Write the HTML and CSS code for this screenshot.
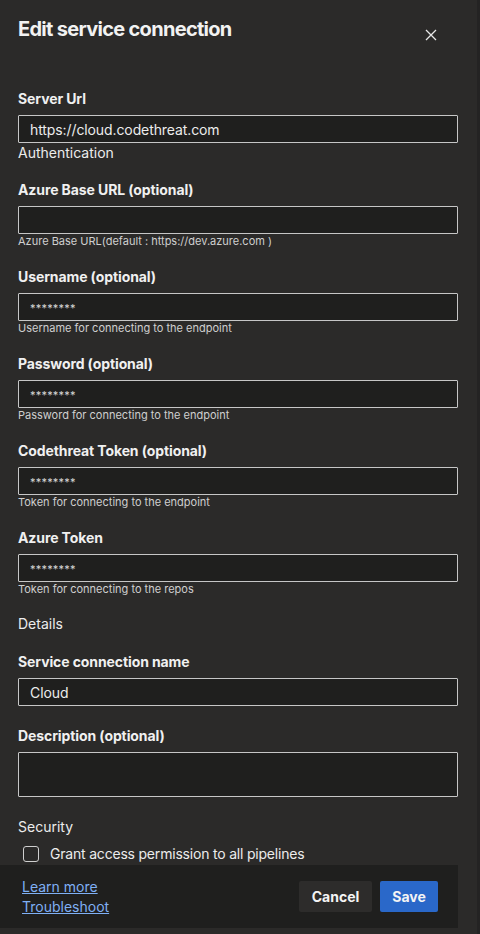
FILE: index.html
```html
<!DOCTYPE html>
<html lang="en">
<head>
<meta charset="utf-8">
<title>Edit service connection</title>
<link rel="stylesheet" href="styles.css">
</head>
<body>
<div class="panel">
  <div class="header">
    <h1 class="title">Edit service connection</h1>
    <button class="close" aria-label="Close">
      <svg width="12" height="12" viewBox="0 0 12 12"><path d="M1 1 L11 11 M11 1 L1 11" stroke="#e8e8e8" stroke-width="1.3" fill="none"/></svg>
    </button>
  </div>
  <div class="content">
    <div class="field first">
      <div class="label">Server Url</div>
      <div class="input">https://cloud.codethreat.com</div>
    </div>
    <div class="section section-auth">Authentication</div>
    <div class="field after-section">
      <div class="label">Azure Base URL (optional)</div>
      <div class="input"></div>
      <div class="helper">Azure Base URL(default : https://dev.azure.com )</div>
    </div>
    <div class="field">
      <div class="label">Username (optional)</div>
      <div class="input"><span class="stars">********</span></div>
      <div class="helper">Username for connecting to the endpoint</div>
    </div>
    <div class="field">
      <div class="label">Password (optional)</div>
      <div class="input"><span class="stars">********</span></div>
      <div class="helper">Password for connecting to the endpoint</div>
    </div>
    <div class="field">
      <div class="label">Codethreat Token (optional)</div>
      <div class="input"><span class="stars">********</span></div>
      <div class="helper">Token for connecting to the endpoint</div>
    </div>
    <div class="field">
      <div class="label">Azure Token</div>
      <div class="input"><span class="stars">********</span></div>
      <div class="helper">Token for connecting to the repos</div>
    </div>
    <div class="section section-details">Details</div>
    <div class="field field-name">
      <div class="label">Service connection name</div>
      <div class="input">Cloud</div>
    </div>
    <div class="field field-desc">
      <div class="label">Description (optional)</div>
      <div class="input textarea"></div>
    </div>
    <div class="section section-security">Security</div>
    <label class="check-row">
      <span class="checkbox"></span>
      <span class="check-text">Grant access permission to all pipelines</span>
    </label>
  </div>
  <div class="footer">
    <div class="links">
      <a href="#" class="link">Learn more</a>
      <a href="#" class="link">Troubleshoot</a>
    </div>
    <div class="buttons">
      <button class="btn btn-cancel">Cancel</button>
      <button class="btn btn-save">Save</button>
    </div>
  </div>
</div>
</body>
</html>
```
FILE: styles.css
```css
* { box-sizing: border-box; }
html, body {
  margin: 0;
  padding: 0;
  width: 480px;
  height: 934px;
  overflow: hidden;
  background: #2b2a29;
  font-family: Inter, "Noto Sans", "Liberation Sans", sans-serif;
  color: #ececec;
}
.panel {
  width: 480px;
  height: 934px;
  display: flex;
  flex-direction: column;
  border-right: 3px solid #242323;
}
.header {
  display: flex;
  justify-content: space-between;
  align-items: flex-start;
  padding: 16px 0 0 18px;
  height: 89px;
  width: 458px;
  flex-shrink: 0;
}
.title {
  margin: 0;
  font-size: 20px;
  line-height: 26px;
  font-weight: 700;
  letter-spacing: -0.7px;
  color: #f2f2f2;
}
.close {
  background: none;
  border: 0;
  padding: 0;
  margin: 13px 21px 0 0;
  width: 12px;
  height: 12px;
  display: flex;
}
.content {
  flex: 1;
  overflow: hidden;
  padding: 0 22px 0 18px;
  width: 480px;
}
.field { margin-top: 19px; }
.field.first { margin-top: 0; }
.field.after-section { margin-top: 17px; }
.field.field-name { margin-top: 18px; }
.field.field-desc { margin-top: 20px; }
.label {
  font-size: 14px;
  line-height: 20px;
  font-weight: 700;
  color: #f0f0f0;
  margin-bottom: 6px;
  letter-spacing: -0.1px;
}
.input {
  height: 28px;
  border: 1px solid #c6c6c6;
  border-radius: 1px;
  background: #1f1f1e;
  padding: 0 11px;
  display: flex;
  align-items: center;
  font-size: 14px;
  color: #ececec;
  letter-spacing: -0.1px;
}
.input.textarea { height: 45px; }
.stars {
  font-size: 11px;
  letter-spacing: 0.2px;
  color: #d8d8d8;
  padding-top: 2px;
}
.helper {
  font-size: 11px;
  line-height: 14px;
  color: #cfcfcf;
}
.section {
  font-size: 14px;
  line-height: 20px;
  color: #ececec;
}
.section-details { margin-top: 18px; }
.section-security { margin-top: 20px; }
.check-row {
  display: flex;
  align-items: center;
  gap: 11px;
  padding-left: 5px;
  margin-top: 7px;
}
.checkbox {
  width: 16px;
  height: 16px;
  border: 1.5px solid #cfcfcf;
  border-radius: 3px;
}
.check-text {
  font-size: 14px;
  line-height: 20px;
  color: #ececec;
  letter-spacing: -0.2px;
}
.footer {
  width: 458px;
  height: 63px;
  margin-bottom: 6px;
  background: #1f1f1e;
  display: flex;
  justify-content: space-between;
  align-items: center;
  padding: 0 20px 0 22px;
  flex-shrink: 0;
}
.links {
  display: flex;
  flex-direction: column;
}
.link {
  font-size: 14px;
  line-height: 20px;
  color: #7fb0f5;
  text-decoration: underline;
}
.buttons {
  display: flex;
  gap: 8px;
}
.btn {
  font-family: inherit;
  font-size: 14px;
  font-weight: 700;
  color: #f4f4f4;
  border: 0;
  border-radius: 2px;
  height: 31px;
  padding: 0;
}
.btn-cancel {
  width: 73px;
  background: #2d2c2b;
}
.btn-save {
  width: 58px;
  background: #2a68c9;
}
```
